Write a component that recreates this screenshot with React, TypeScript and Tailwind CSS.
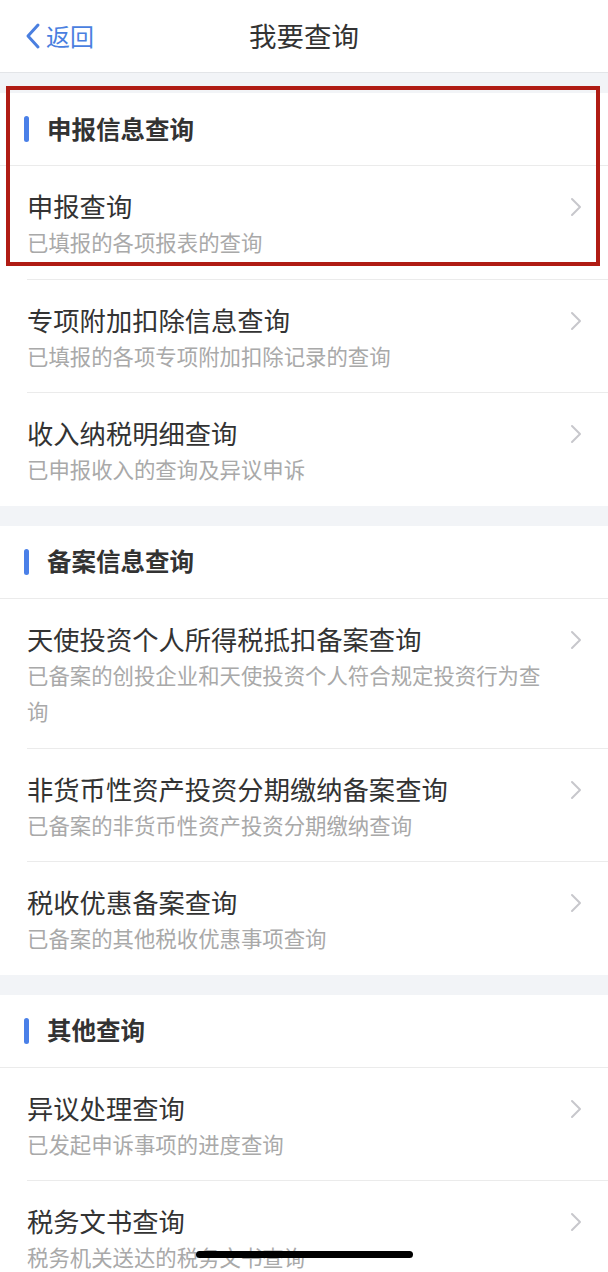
import React from "react";

type Item = { title: string; sub: string };
type Section = { name: string; items: Item[] };

const sections: Section[] = [
  {
    name: "申报信息查询",
    items: [
      { title: "申报查询", sub: "已填报的各项报表的查询" },
      { title: "专项附加扣除信息查询", sub: "已填报的各项专项附加扣除记录的查询" },
      { title: "收入纳税明细查询", sub: "已申报收入的查询及异议申诉" },
    ],
  },
  {
    name: "备案信息查询",
    items: [
      {
        title: "天使投资个人所得税抵扣备案查询",
        sub: "已备案的创投企业和天使投资个人符合规定投资行为查询",
      },
      { title: "非货币性资产投资分期缴纳备案查询", sub: "已备案的非货币性资产投资分期缴纳查询" },
      { title: "税收优惠备案查询", sub: "已备案的其他税收优惠事项查询" },
    ],
  },
  {
    name: "其他查询",
    items: [
      { title: "异议处理查询", sub: "已发起申诉事项的进度查询" },
      { title: "税务文书查询", sub: "税务机关送达的税务文书查询" },
    ],
  },
];

function Chevron() {
  return (
    <svg width="12" height="20" viewBox="0 0 12 20" className="mt-[9px] ml-[2px] shrink-0">
      <path d="M2 2 L10 10 L2 18" fill="none" stroke="#c7c7cc" strokeWidth="2" strokeLinecap="round" strokeLinejoin="round" />
    </svg>
  );
}

export default function App() {
  return (
    <div
      className="relative w-[608px] h-[1272px] overflow-hidden bg-[#f2f4f7]"
      style={{ fontFamily: '"Noto Sans CJK SC", "Noto Sans", sans-serif' }}
    >
      <div className="h-[73px] bg-white border-b border-[#e3e5e8] flex items-center relative">
        <div className="flex items-center pl-[24px] gap-[4px]">
          <svg width="18" height="28" viewBox="0 0 18 28">
            <path d="M14 3 L4 14 L14 25" fill="none" stroke="#4a7fe0" strokeWidth="3" strokeLinecap="round" strokeLinejoin="round" />
          </svg>
          <span className="text-[24px] leading-none text-[#4a7fe0]">返回</span>
        </div>
        <div className="absolute inset-x-0 top-0 h-[72px] flex items-center justify-center pointer-events-none">
          <span className="text-[27.5px] leading-none text-[#333333]">我要查询</span>
        </div>
      </div>

      <div className="flex flex-col gap-[20px] pt-[20px]">
        {sections.map((s) => (
          <div key={s.name} className="bg-white">
            <div className="h-[73px] flex items-center border-b border-[#ebebeb]">
              <div className="ml-[24px] w-[5px] h-[26px] rounded-full bg-[#4a80e8]" />
              <span className="ml-[18px] text-[24.5px] font-bold leading-none text-[#333333]">{s.name}</span>
            </div>
            {s.items.map((it, i) => (
              <div key={it.title} className="pl-[27px]">
                <div
                  className={`flex items-start pt-[22px] pb-[18px] pr-[26px] ${
                    i < s.items.length - 1 ? "border-b border-[#ebebeb]" : ""
                  }`}
                >
                  <div className="flex-1 min-w-0">
                    <div className="text-[26.3px] leading-[36px] text-[#333333]">{it.title}</div>
                    <div className="text-[21.4px] leading-[36.5px] text-[#a9a9a9] pr-[16px]">{it.sub}</div>
                  </div>
                  <Chevron />
                </div>
              </div>
            ))}
          </div>
        ))}
      </div>

      <div className="absolute left-[6px] top-[86px] w-[594px] h-[180px] border-[4px] border-[#b01c14]" />
      <div className="absolute left-[196px] bottom-[14px] w-[217px] h-[7px] rounded-full bg-black" />
    </div>
  );
}
